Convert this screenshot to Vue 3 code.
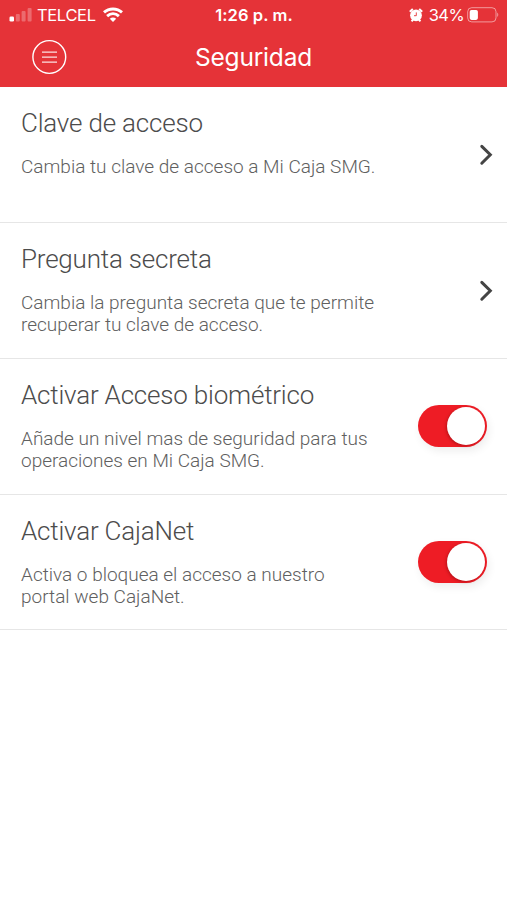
<script setup>
import { ref } from 'vue'
const rows = ref([
  { title: 'Clave de acceso', lines: ['Cambia tu clave de acceso a Mi Caja SMG.'] },
  { title: 'Pregunta secreta', lines: ['Cambia la pregunta secreta que te permite', 'recuperar tu clave de acceso.'] },
  { title: 'Activar Acceso biométrico', lines: ['Añade un nivel mas de seguridad para tus', 'operaciones en Mi Caja SMG.'], toggle: true },
  { title: 'Activar CajaNet', lines: ['Activa o bloquea el acceso a nuestro', 'portal web CajaNet.'], toggle: true },
])
</script>

<template>
  <div class="screen">
    <header>
      <div class="status">
        <div class="left">
          <svg width="24" height="16" viewBox="0 0 24 16"><g fill="#fff"><rect x=".5" y="9.5" width="4.5" height="5" rx="1.3"/><g opacity=".27"><rect x="6.8" y="7" width="4" height="7.5" rx="1"/><rect x="12.6" y="4" width="4" height="10.5" rx="1"/><rect x="18.6" y="1" width="4" height="13.5" rx="1"/></g></g></svg>
          <span class="carrier">TELCEL</span>
          <svg class="wifi" width="20" height="15" viewBox="0 0 20 15" fill="none" stroke="#fff" stroke-width="2.9"><path d="M1 5.4C6 .8 14 .8 19 5.4M4.1 9.1C7.6 5.9 12.4 5.9 15.9 9.1"/><path d="M10 15L6.8 11.8Q10 9.4 13.2 11.8Z" fill="#fff" stroke="none"/></svg>
        </div>
        <span class="time">1:26 p. m.</span>
        <div class="right">
          <svg width="14" height="14" viewBox="0 0 14 14"><circle cx="7" cy="7.3" r="5.9" fill="#fff"/><path d="M.8 3.7L3.8 1M13.2 3.7L10.2 1M2.6 13.3l1.6-2M11.4 13.3l-1.6-2" stroke="#fff" stroke-width="2"/><path d="M7.3 4.4v3.3H5" fill="none" stroke="#e53338" stroke-width=".9"/></svg>
          <span class="pct">34%</span>
          <svg class="battery" width="32" height="16" viewBox="0 0 32 16"><rect x=".7" y=".7" width="28.3" height="14.2" rx="4" fill="none" stroke="#fff" stroke-opacity=".5"/><rect x="2.7" y="2.9" width="8.2" height="10" rx="1.8" fill="#fff"/><path d="M30.2 5.5q2.2 2.2 0 4.6z" fill="#fff" opacity=".5"/></svg>
        </div>
      </div>
      <div class="nav">
        <svg class="menu" width="36" height="36" viewBox="0 0 36 36" fill="none" stroke="#fff"><circle cx="18.3" cy="18" r="16.4" stroke-width="1.4"/><path d="M11 13.1h15M11 18.1h15M11 23.1h15" stroke-width="1.3" opacity=".85"/></svg>
        <h1>Seguridad</h1>
      </div>
    </header>
    <section v-for="r in rows" :key="r.title" class="row">
      <div class="copy">
        <h2>{{ r.title }}</h2>
        <p><span v-for="l in r.lines" :key="l">{{ l }}</span></p>
      </div>
      <div v-if="r.toggle" class="toggle"><i></i></div>
      <svg v-else class="chev" width="16" height="22" viewBox="0 0 16 22"><path d="M2.8 2.4L11.3 10.8L2.8 19.2" fill="none" stroke="#444" stroke-width="3" stroke-linecap="round"/></svg>
    </section>
  </div>
</template>

<style>
body { margin: 0; background: #fff; }
</style>
<style scoped>
.screen { width: 507px; height: 900px; background: #fff; font-family: Roboto, sans-serif; font-weight: 300; overflow: hidden; }
header { height: 87px; background: #e53338; color: #fff; }
.status { height: 29px; display: grid; grid-template-columns: 1fr auto 1fr; align-items: center; padding: 0 8px 0 9px; font: 400 16.5px Inter, sans-serif; }
.left, .right { display: flex; align-items: center; }
.right { justify-content: flex-end; }
.carrier { margin-left: 4px; letter-spacing: -0.35px; }
.wifi { margin-left: 7px; }
.time { font-weight: 600; letter-spacing: 0.1px; }
.pct { margin: 0 3px 0 6px; letter-spacing: -0.6px; }
.nav { height: 56px; display: flex; align-items: center; padding-left: 31px; }
h1 { margin: 0 0 1px 128px; font: 400 24.5px Inter, sans-serif; letter-spacing: -0.2px; }
.row { height: 135px; border-bottom: 1px solid #e6e6e6; display: flex; justify-content: space-between; padding: 0 20px 0 21px; }
.row:last-child { height: 134px; }
h2 { margin: 19px 0 0; font-size: 26px; line-height: 34px; font-weight: 300; letter-spacing: -0.2px; white-space: nowrap; color: #4c4c4c; }
p { margin: 16px 0 0; font-size: 19px; line-height: 22px; color: #606060; }
p span { display: block; white-space: nowrap; }
.chev { margin-top: 57px; margin-right: -8px; }
.toggle { margin-top: 46px; width: 69px; height: 42px; border-radius: 21px; background: #ee1c25; display: flex; justify-content: flex-end; box-shadow: 2px 4px 8px rgba(0, 0, 0, .07); }
.toggle i { margin: 2px; width: 38px; height: 38px; border-radius: 50%; background: #fff; box-shadow: -1px 1px 3px rgba(90, 0, 0, .35); }
</style>
